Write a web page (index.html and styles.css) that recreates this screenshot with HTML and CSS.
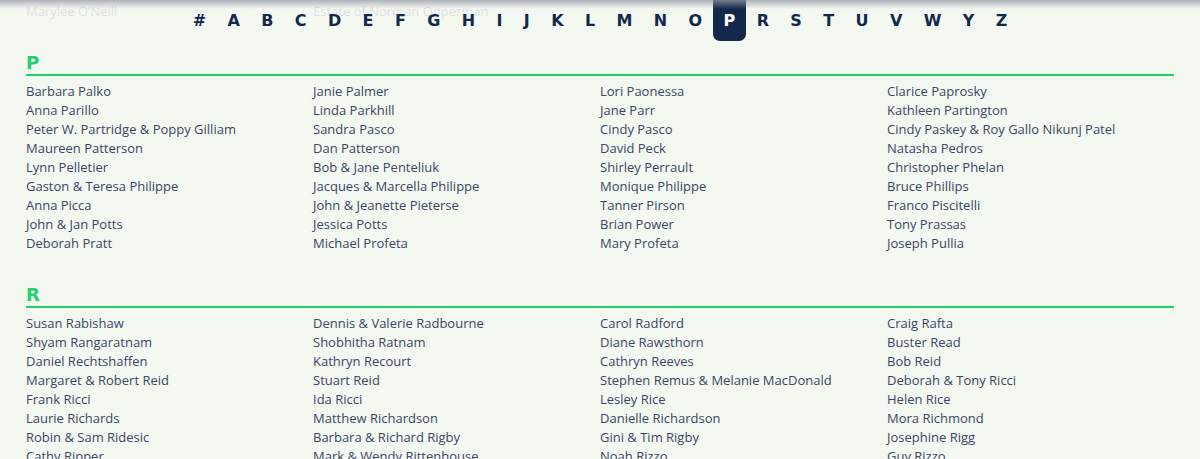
FILE: index.html
```html
<!DOCTYPE html>
<html lang="en">
<head>
<meta charset="utf-8">
<title>Donors</title>
<link rel="stylesheet" href="styles.css">
</head>
<body>
<nav class="alpha-nav">
  <a class="alpha-link">#</a><a class="alpha-link">A</a><a class="alpha-link">B</a><a class="alpha-link">C</a><a class="alpha-link">D</a><a class="alpha-link">E</a><a class="alpha-link">F</a><a class="alpha-link">G</a><a class="alpha-link">H</a><a class="alpha-link">I</a><a class="alpha-link">J</a><a class="alpha-link">K</a><a class="alpha-link">L</a><a class="alpha-link">M</a><a class="alpha-link">N</a><a class="alpha-link">O</a><a class="alpha-link is-active">P</a><a class="alpha-link">R</a><a class="alpha-link">S</a><a class="alpha-link">T</a><a class="alpha-link">U</a><a class="alpha-link">V</a><a class="alpha-link">W</a><a class="alpha-link">Y</a><a class="alpha-link">Z</a>
</nav>
<div class="top-shade"></div>
<main class="page">
  <section class="group group-faded">
    <ul class="names">
      <li>Marylee O’Neill</li><li>Estate of Norman Opperman</li>
    </ul>
  </section>
  <section class="group">
    <h2 class="group-title">P</h2>
    <ul class="names">
      <li>Barbara Palko</li><li>Janie Palmer</li><li>Lori Paonessa</li><li>Clarice Paprosky</li>
      <li>Anna Parillo</li><li>Linda Parkhill</li><li>Jane Parr</li><li>Kathleen Partington</li>
      <li>Peter W. Partridge &amp; Poppy Gilliam</li><li>Sandra Pasco</li><li>Cindy Pasco</li><li>Cindy Paskey &amp; Roy Gallo Nikunj Patel</li>
      <li>Maureen Patterson</li><li>Dan Patterson</li><li>David Peck</li><li>Natasha Pedros</li>
      <li>Lynn Pelletier</li><li>Bob &amp; Jane Penteliuk</li><li>Shirley Perrault</li><li>Christopher Phelan</li>
      <li>Gaston &amp; Teresa Philippe</li><li>Jacques &amp; Marcella Philippe</li><li>Monique Philippe</li><li>Bruce Phillips</li>
      <li>Anna Picca</li><li>John &amp; Jeanette Pieterse</li><li>Tanner Pirson</li><li>Franco Piscitelli</li>
      <li>John &amp; Jan Potts</li><li>Jessica Potts</li><li>Brian Power</li><li>Tony Prassas</li>
      <li>Deborah Pratt</li><li>Michael Profeta</li><li>Mary Profeta</li><li>Joseph Pullia</li>
    </ul>
  </section>
  <section class="group">
    <h2 class="group-title">R</h2>
    <ul class="names">
      <li>Susan Rabishaw</li><li>Dennis &amp; Valerie Radbourne</li><li>Carol Radford</li><li>Craig Rafta</li>
      <li>Shyam Rangaratnam</li><li>Shobhitha Ratnam</li><li>Diane Rawsthorn</li><li>Buster Read</li>
      <li>Daniel Rechtshaffen</li><li>Kathryn Recourt</li><li>Cathryn Reeves</li><li>Bob Reid</li>
      <li>Margaret &amp; Robert Reid</li><li>Stuart Reid</li><li>Stephen Remus &amp; Melanie MacDonald</li><li>Deborah &amp; Tony Ricci</li>
      <li>Frank Ricci</li><li>Ida Ricci</li><li>Lesley Rice</li><li>Helen Rice</li>
      <li>Laurie Richards</li><li>Matthew Richardson</li><li>Danielle Richardson</li><li>Mora Richmond</li>
      <li>Robin &amp; Sam Ridesic</li><li>Barbara &amp; Richard Rigby</li><li>Gini &amp; Tim Rigby</li><li>Josephine Rigg</li>
      <li>Cathy Ripper</li><li>Mark &amp; Wendy Rittenhouse</li><li>Noah Rizzo</li><li>Guy Rizzo</li>
    </ul>
  </section>
</main>
</body>
</html>
```

FILE: styles.css
```css
* { box-sizing: border-box; }
html, body { margin: 0; padding: 0; }
body {
  background: #f3f8f1;
  font-family: "Open Sans", "DejaVu Sans", sans-serif;
  color: #3b4665;
  overflow: hidden;
  height: 459px;
}
.alpha-nav {
  position: absolute;
  top: 0; left: 0; right: 0;
  height: 41px;
  display: flex;
  justify-content: center;
  background: rgba(243, 248, 241, 0.5);
  z-index: 2;
}
.alpha-link {
  display: flex;
  align-items: center;
  justify-content: center;
  padding: 0 10.7px;
  height: 41px;
  font-family: "DejaVu Sans", sans-serif;
  font-weight: 700;
  font-size: 16px;
  color: #13294b;
  border-radius: 0 0 7px 7px;
}
.alpha-link.is-active {
  background: #13294b;
  color: #ffffff;
}
.top-shade {
  position: absolute;
  top: 0; left: 0; right: 0;
  height: 9px;
  background: linear-gradient(to bottom, rgba(150, 156, 168, 0.75), rgba(200, 205, 210, 0));
  z-index: 3;
}
.page {
  padding: 2px 26px 0;
}
.group { margin-bottom: 30px; }
.group-title {
  margin: 0;
  font-family: "DejaVu Sans", sans-serif;
  font-weight: 700;
  font-size: 18px;
  line-height: 23px;
  color: #22d06c;
  border-bottom: 2px solid #22d06c;
}
.names {
  list-style: none;
  margin: 0;
  padding: 5px 0 0;
  display: grid;
  grid-template-columns: repeat(4, 287px);
  font-size: 13px;
  line-height: 19px;
}
.group-faded .names { padding-top: 0; color: #c8cdc8; }
.group-title + .names { padding-top: 6px; }
```
